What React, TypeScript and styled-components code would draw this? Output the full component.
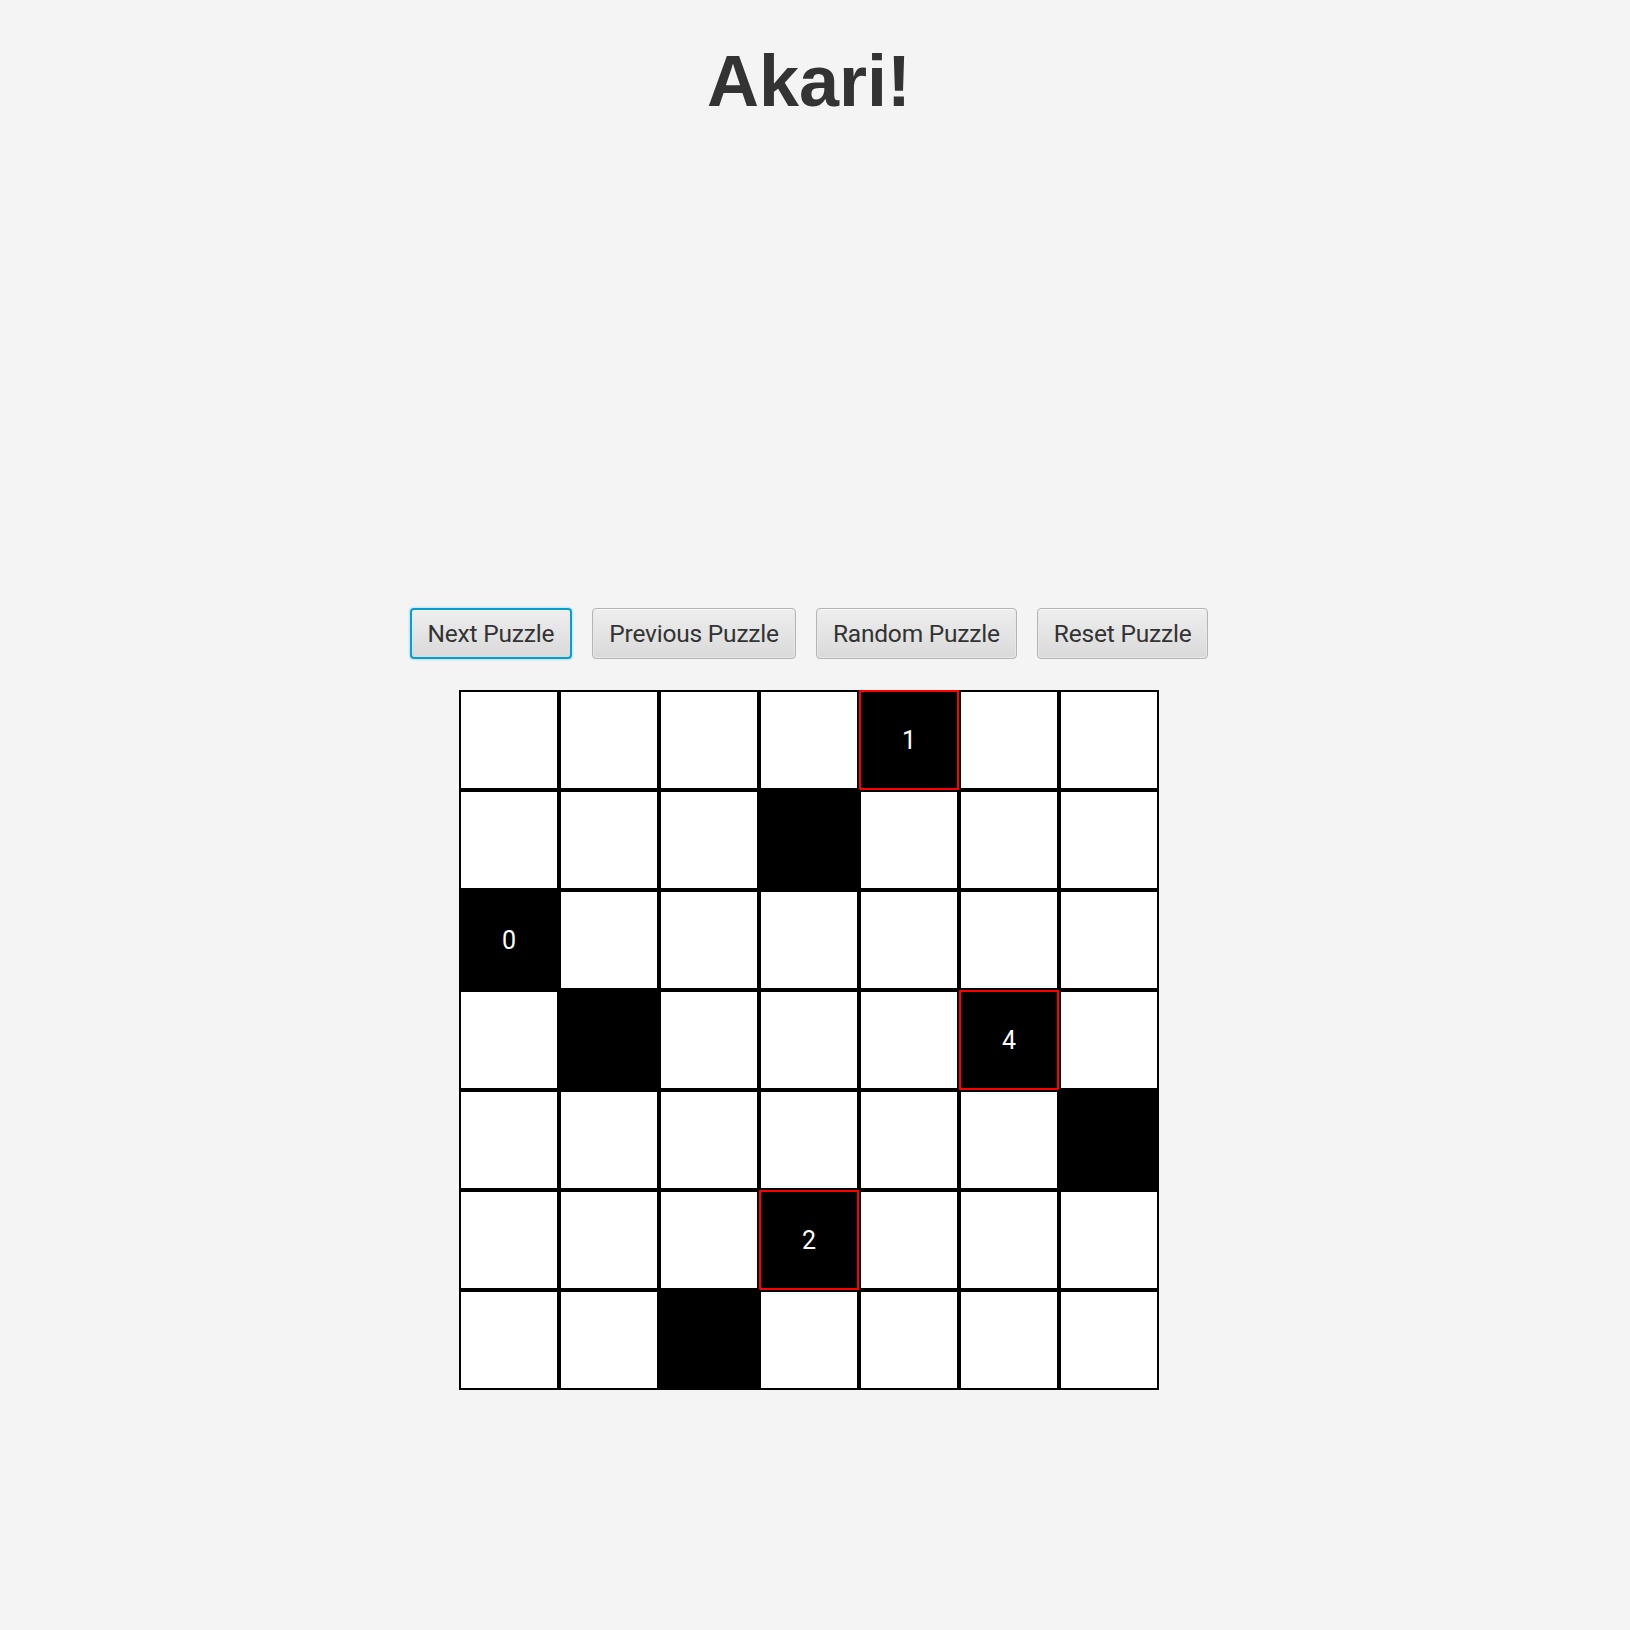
import React from "react";
import styled, { createGlobalStyle } from "styled-components";

const GlobalStyle = createGlobalStyle`
  html, body {
    margin: 0;
    padding: 0;
    background: #f4f4f4;
  }
  body {
    font-family: Roboto, "Liberation Sans", sans-serif;
  }
`;

const Page = styled.div`
  width: 1630px;
  min-height: 1630px;
  box-sizing: border-box;
  padding-right: 12px;
  display: flex;
  flex-direction: column;
  align-items: center;
`;

const Title = styled.h1`
  margin: 45px 0 0;
  font-family: "Liberation Sans", Arial, sans-serif;
  font-weight: 700;
  font-size: 72px;
  line-height: 72px;
  color: #333333;
`;

const Controls = styled.div`
  margin-top: 491px;
  display: flex;
  gap: 20px;
`;

const Button = styled.button<{ $focused?: boolean }>`
  height: 51px;
  padding: 0 16px;
  box-sizing: border-box;
  font-family: Roboto, "Liberation Sans", sans-serif;
  font-size: 24.5px;
  letter-spacing: -0.2px;
  color: #333333;
  border-radius: 4px;
  border: ${(p) => (p.$focused ? "2px solid #039ed3" : "1px solid #b4b4b4")};
  background: linear-gradient(to bottom, #eeeeee 0%, #e4e4e4 50%, #d9d9d9 100%);
  box-shadow: ${(p) =>
    p.$focused
      ? "0 0 0 1.5px #cfe8f4, inset 0 1px 0 #f8f8f8"
      : "inset 0 1px 0 #f8f8f8, inset 0 0 0 1px #e8e8e8"};
  cursor: pointer;
  display: flex;
  align-items: center;
  justify-content: center;
`;

const Board = styled.div`
  margin-top: 31px;
  display: grid;
  grid-template-columns: repeat(7, 100px);
  grid-auto-rows: 100px;
  overflow: hidden;
`;

type Kind = "empty" | "wall" | "clue" | "bad";

const Cell = styled.div<{ $kind: Kind }>`
  box-sizing: border-box;
  border: 2px solid ${(p) => (p.$kind === "bad" ? "#ff0000" : "#000000")};
  background: ${(p) => (p.$kind === "empty" ? "#ffffff" : "#000000")};
  display: flex;
  align-items: center;
  justify-content: center;
  font-family: Roboto, "Liberation Sans", sans-serif;
  font-size: 25px;
  color: #ffffff;
  ${(p) =>
    p.$kind === "wall" || p.$kind === "clue"
      ? `
    position: relative;
    z-index: 1;
    border-radius: 3px;
    box-shadow: 0 0 0 2px #000000;
  `
      : ""}
`;

const layout: string[][] = [
  [".", ".", ".", ".", "1!", ".", "."],
  [".", ".", ".", "W", ".", ".", "."],
  ["0", ".", ".", ".", ".", ".", "."],
  [".", "W", ".", ".", ".", "4!", "."],
  [".", ".", ".", ".", ".", ".", "W"],
  [".", ".", ".", "2!", ".", ".", "."],
  [".", ".", "W", ".", ".", ".", "."],
];

function parse(v: string): { kind: Kind; label: string } {
  if (v === ".") return { kind: "empty", label: "" };
  if (v === "W") return { kind: "wall", label: "" };
  if (v.endsWith("!")) return { kind: "bad", label: v.slice(0, -1) };
  return { kind: "clue", label: v };
}

export default function App() {
  return (
    <>
      <GlobalStyle />
      <Page>
        <Title>Akari!</Title>
        <Controls>
          <Button $focused>Next Puzzle</Button>
          <Button>Previous Puzzle</Button>
          <Button>Random Puzzle</Button>
          <Button>Reset Puzzle</Button>
        </Controls>
        <Board>
          {layout.map((row, r) =>
            row.map((v, c) => {
              const { kind, label } = parse(v);
              return (
                <Cell key={`${r}-${c}`} $kind={kind}>
                  {label}
                </Cell>
              );
            })
          )}
        </Board>
      </Page>
    </>
  );
}
